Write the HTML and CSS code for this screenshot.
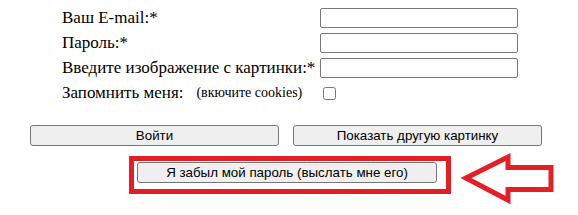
FILE: index.html
```html
<!DOCTYPE html>
<html>
<head>
    <meta charset="utf-8" />
    <link rel="stylesheet" href="styles.css">
</head>
<body>
<form class="login">
    <div class="fields">
        <label class="label" for="email">Ваш E-mail:*</label>
        <input class="field" id="email" type="text" />
        <label class="label" for="pass">Пароль:*</label>
        <input class="field" id="pass" type="password" />
        <label class="label" for="captcha">Введите изображение с картинки:*</label>
        <input class="field" id="captcha" type="text" />
        <label class="label" for="remember">Запомнить меня: <span class="hint">(вкючите cookies)</span></label>
        <div class="check-cell"><input class="check" id="remember" type="checkbox" /></div>
    </div>
    <div class="actions">
        <button class="btn" type="button">Войти</button>
        <button class="btn" type="button">Показать другую картинку</button>
    </div>
    <div class="forgot-row">
        <div class="highlight">
            <button class="btn btn-forgot" type="button">Я забыл мой пароль (выслать мне его)</button>
        </div>
        <svg class="arrow" width="100" height="56" viewBox="0 0 100 56">
            <!-- svg origin is page (458,150) -->
            <polygon points="8,28 50,7 50,17.5 93,17.5 93,39.5 50,39.5 50,50" fill="none" stroke="#e31e25" stroke-width="5" stroke-linejoin="miter" />
        </svg>
    </div>
</form>
</body>
</html>
```

FILE: styles.css
```css
body{
    margin: 0;
    background: #fff;
    color: #000;
}
.login{
    width: 578px;
    padding-top: 8px;
}
.fields{
    display: grid;
    grid-template-columns: 258px 198px;
    grid-auto-rows: 20px;
    row-gap: 5px;
    margin-left: 62px;
}
.label{
    display: flex;
    align-items: center;
    font-family: "Liberation Serif", serif;
    font-size: 17px;
    white-space: nowrap;
}
.hint{
    font-size: 14px;
    margin-left: 13px;
}
.field{
    box-sizing: border-box;
    width: 198px;
    height: 20px;
    margin: 0;
    border: 1px solid #767676;
    border-radius: 2px;
    background: #fff;
}
.check-cell{
    display: flex;
    align-items: center;
}
.check{
    width: 13px;
    height: 13px;
    margin: 0 0 0 3px;
}
.actions{
    display: flex;
    gap: 14px;
    margin: 22px 0 0 30px;
}
.btn{
    box-sizing: border-box;
    width: 249px;
    height: 21px;
    margin: 0;
    padding: 0;
    border: 1px solid #767676;
    border-radius: 3px;
    background: #efefef;
    color: #000;
    font-family: "Liberation Sans", Arial, sans-serif;
    font-size: 13.33px;
}
.forgot-row{
    display: flex;
    align-items: flex-start;
    margin: 4px 0 0 129px;
}
.highlight{
    margin-top: 6px;
    padding: 1px 9px 6px 3px;
    border: 5px solid #e31e25;
}
.btn-forgot{
    width: 300px;
    display: block;
}
.arrow{
    display: block;
    margin-left: 7px;
}
```
